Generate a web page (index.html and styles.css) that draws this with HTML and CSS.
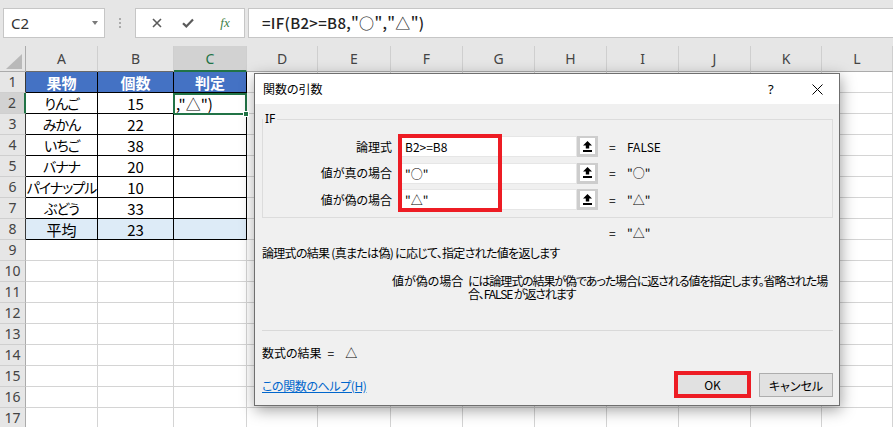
FILE: index.html
```html
<!DOCTYPE html>
<html lang="ja">
<head>
<meta charset="utf-8">
<title>関数の引数</title>
<link rel="stylesheet" href="styles.css">
</head>
<body>
<div class="fbar">
  <div class="namebox"><span>C2</span><i class="caret"></i></div>
  <div class="grip"><i></i><i></i><i></i></div>
  <div class="fxbox">
    <span class="ic ic-x"><svg width="10" height="10" viewBox="0 0 10 10"><path d="M1 1L9 9M9 1L1 9" stroke="#5a5a5a" stroke-width="1.6" fill="none"/></svg></span>
    <span class="ic ic-ok"><svg width="12" height="10" viewBox="0 0 12 10"><path d="M1 5.2L4.3 8.4L11 1.5" stroke="#5a5a5a" stroke-width="2.2" fill="none"/></svg></span>
    <span class="ic ic-fx">fx</span>
  </div>
  <div class="formula">=IF(B2&gt;=B8,"○","△")</div>
</div>

<div class="sheet">
  <div class="corner"><i></i></div><div class="ch chb">A</div><div class="ch chb">B</div><div class="ch chsel">C</div><div class="ch">D</div><div class="ch">E</div><div class="ch">F</div><div class="ch">G</div><div class="ch">H</div><div class="ch">I</div><div class="ch">J</div><div class="ch">K</div><div class="ch">L</div>

  <div class="rh rtb">1</div><div class="tb th">果物</div><div class="tb th">個数</div><div class="tb th">判定</div><div></div><div></div><div></div><div></div><div></div><div></div><div></div><div></div><div></div>
  <div class="rh rsel">2</div><div class="tb kana">りんご</div><div class="tb">15</div><div class="tb csel"><span>,"△")</span><i class="handle"></i></div><div></div><div></div><div></div><div></div><div></div><div></div><div></div><div></div><div></div>
  <div class="rh rtb">3</div><div class="tb kana">みかん</div><div class="tb">22</div><div class="tb"></div><div></div><div></div><div></div><div></div><div></div><div></div><div></div><div></div><div></div>
  <div class="rh rtb">4</div><div class="tb kana">いちご</div><div class="tb">38</div><div class="tb"></div><div></div><div></div><div></div><div></div><div></div><div></div><div></div><div></div><div></div>
  <div class="rh rtb">5</div><div class="tb kana">バナナ</div><div class="tb">20</div><div class="tb"></div><div></div><div></div><div></div><div></div><div></div><div></div><div></div><div></div><div></div>
  <div class="rh rtb">6</div><div class="tb kana">パイナップル</div><div class="tb">10</div><div class="tb"></div><div></div><div></div><div></div><div></div><div></div><div></div><div></div><div></div><div></div>
  <div class="rh rtb">7</div><div class="tb kana">ぶどう</div><div class="tb">33</div><div class="tb"></div><div></div><div></div><div></div><div></div><div></div><div></div><div></div><div></div><div></div>
  <div class="rh rtb">8</div><div class="tb avg">平均</div><div class="tb avg">23</div><div class="tb avg"></div><div></div><div></div><div></div><div></div><div></div><div></div><div></div><div></div><div></div>
  <div class="rh">9</div><div></div><div></div><div></div><div></div><div></div><div></div><div></div><div></div><div></div><div></div><div></div><div></div>
  <div class="rh">10</div><div></div><div></div><div></div><div></div><div></div><div></div><div></div><div></div><div></div><div></div><div></div><div></div>
  <div class="rh">11</div><div></div><div></div><div></div><div></div><div></div><div></div><div></div><div></div><div></div><div></div><div></div><div></div>
  <div class="rh">12</div><div></div><div></div><div></div><div></div><div></div><div></div><div></div><div></div><div></div><div></div><div></div><div></div>
  <div class="rh">13</div><div></div><div></div><div></div><div></div><div></div><div></div><div></div><div></div><div></div><div></div><div></div><div></div>
  <div class="rh">14</div><div></div><div></div><div></div><div></div><div></div><div></div><div></div><div></div><div></div><div></div><div></div><div></div>
  <div class="rh">15</div><div></div><div></div><div></div><div></div><div></div><div></div><div></div><div></div><div></div><div></div><div></div><div></div>
  <div class="rh">16</div><div></div><div></div><div></div><div></div><div></div><div></div><div></div><div></div><div></div><div></div><div></div><div></div>
  <div class="rh">17</div><div></div><div></div><div></div><div></div><div></div><div></div><div></div><div></div><div></div><div></div><div></div><div></div>
</div>

<div class="dlg">
  <div class="dlg-title">
    <span class="dlg-name">関数の引数</span>
    <span class="dlg-help">?</span>
    <span class="dlg-close"><svg width="11" height="11" viewBox="0 0 11 11"><path d="M0.5 0.5L10.5 10.5M10.5 0.5L0.5 10.5" stroke="#000" stroke-width="1" fill="none"/></svg></span>
  </div>
  <div class="dlg-body">
    <fieldset class="grp">
      <legend>IF</legend>
      <div class="arg">
        <span class="lbl">論理式</span>
        <span class="inp">B2&gt;=B8</span>
        <span class="refbtn"><span class="refin"><svg width="9" height="11" viewBox="0 0 9 11"><path d="M4.5 0L9 4.6H6.2V7.6H2.8V4.6H0Z" fill="#000"/><rect x="0" y="9" width="9" height="2" fill="#000"/></svg></span></span>
        <span class="eq">=</span><span class="val">FALSE</span>
      </div>
      <div class="arg">
        <span class="lbl">値が真の場合</span>
        <span class="inp">"○"</span>
        <span class="refbtn"><span class="refin"><svg width="9" height="11" viewBox="0 0 9 11"><path d="M4.5 0L9 4.6H6.2V7.6H2.8V4.6H0Z" fill="#000"/><rect x="0" y="9" width="9" height="2" fill="#000"/></svg></span></span>
        <span class="eq">=</span><span class="val">"○"</span>
      </div>
      <div class="arg">
        <span class="lbl">値が偽の場合</span>
        <span class="inp">"△"</span>
        <span class="refbtn"><span class="refin"><svg width="9" height="11" viewBox="0 0 9 11"><path d="M4.5 0L9 4.6H6.2V7.6H2.8V4.6H0Z" fill="#000"/><rect x="0" y="9" width="9" height="2" fill="#000"/></svg></span></span>
        <span class="eq">=</span><span class="val">"△"</span>
      </div>
    </fieldset>
    <div class="eqrow"><span class="eq">=</span><span class="val">"△"</span></div>
    <p class="desc">論理式の結果 (真または偽) に応じて、指定された値を返します</p>
    <div class="detail">
      <span class="dl">値が偽の場合</span>
      <div class="dt">
        <span class="dline">には論理式の結果が偽であった場合に返される値を指定します。省略された場</span>
        <span class="dline">合、FALSE が返されます</span>
      </div>
    </div>
    <div class="sep"></div>
    <div class="result"><span>数式の結果</span><span class="r-eq">=</span><span class="r-val">△</span></div>
    <div class="foot">
      <a class="help" href="#">この関数のヘルプ(H)</a>
      <div class="btns">
        <button class="btn ok">OK</button>
        <button class="btn cancel">キャンセル</button>
      </div>
    </div>
  </div>
  <div class="mark"></div>
</div>
</body>
</html>
```
FILE: styles.css
```css
* { box-sizing: border-box; }

body {
  margin: 0;
  width: 893px;
  height: 427px;
  overflow: hidden;
  position: relative;
  background: #fff;
  font-family: "Noto Sans CJK JP", "Noto Sans", sans-serif;
  font-feature-settings: "palt";
  color: #000;
}

/* formula bar */
.fbar {
  height: 46px;
  background: #e6e6e6;
  display: flex;
  align-items: flex-start;
  padding-top: 8px;
}
.namebox {
  margin-left: 3px;
  width: 102px;
  height: 30px;
  background: #fff;
  border: 1px solid #c6c6c6;
  display: flex;
  align-items: center;
  justify-content: space-between;
  padding: 0 6px 0 7px;
  font-family: "Noto Sans", sans-serif;
  font-size: 15px;
  color: #333;
}
.caret {
  width: 0;
  height: 0;
  border-left: 3.5px solid transparent;
  border-right: 3.5px solid transparent;
  border-top: 4px solid #7a7a7a;
}
.grip {
  width: 30px;
  height: 30px;
  display: flex;
  flex-direction: column;
  align-items: center;
  justify-content: center;
  gap: 2px;
}
.grip i {
  width: 2px;
  height: 2px;
  background: #ababab;
}
.fxbox {
  width: 110px;
  height: 30px;
  background: #fff;
  border: 1px solid #c6c6c6;
  display: flex;
  align-items: center;
}
.ic {
  width: 16px;
  display: flex;
  justify-content: center;
  align-items: center;
}
.ic-x { margin-left: 13px; }
.ic-ok { margin-left: 15px; }
.ic-fx {
  margin-left: 21px;
  font-family: "Liberation Serif", serif;
  font-style: italic;
  font-size: 13px;
  color: #3e8044;
}
.formula {
  margin-left: 3px;
  flex: 1;
  height: 30px;
  background: #fff;
  border: 1px solid #c6c6c6;
  border-right: none;
  padding-left: 13px;
  font-size: 15px;
  font-weight: 500;
  line-height: 28px;
  color: #222;
  letter-spacing: 0.3px;
  font-feature-settings: normal;
}

/* sheet grid */
.sheet {
  display: grid;
  grid-template-columns: 26px 72px 76px 73px 71px 73px 72px 72px 72px 72px 72px 71px 71px;
  grid-template-rows: 26px;
  grid-auto-rows: 21px;
}
.sheet > div {
  border-right: 1px solid #d4d4d4;
  border-bottom: 1px solid #d4d4d4;
  display: flex;
  align-items: center;
  justify-content: center;
  font-size: 15px;
  line-height: 1;
  white-space: nowrap;
  position: relative;
}
.sheet > .corner {
  background: #e6e6e6;
  align-items: flex-end;
  justify-content: flex-end;
  padding: 0 3px 2px 0;
  border-right-color: #ababab;
  border-bottom-color: #ababab;
}
.corner i {
  width: 0;
  height: 0;
  border-left: 16px solid transparent;
  border-bottom: 15px solid #b9b9b9;
}
.sheet > .ch {
  background: #e6e6e6;
  font-family: "Noto Sans", sans-serif;
  font-size: 14px;
  color: #444;
  border-right-color: #cfcfcf;
  border-bottom-color: #ababab;
  padding-top: 1px;
}
.sheet > .chb { border-bottom-color: #6a6a6a; }
.sheet > .chsel {
  background: #d2d2d2;
  color: #217346;
  border-bottom: 2px solid #217346;
}
.sheet > .rh {
  background: #e6e6e6;
  font-family: "Noto Sans", sans-serif;
  font-size: 14px;
  color: #444;
  border-right-color: #ababab;
  border-bottom-color: #cfcfcf;
}
.sheet > .rtb { border-right-color: #3a3a3a; }
.sheet > .rsel {
  background: #d2d2d2;
  border-right: 2px solid #217346;
}
.sheet > .tb {
  border-right-color: #000;
  border-bottom-color: #000;
}
.sheet > .kana {
  font-size: 14px;
  letter-spacing: -1px;
}
.sheet > .th {
  background: #4472c4;
  color: #fff;
  font-weight: bold;
}
.sheet > .avg { background: #ddebf7; }
.sheet > .csel {
  justify-content: flex-start;
  padding-left: 2px;
}
.csel::after {
  content: "";
  position: absolute;
  left: -1px;
  top: 0;
  right: -1px;
  bottom: -2px;
  border: 2px solid #217346;
}
.handle {
  position: absolute;
  right: -3px;
  bottom: -4px;
  width: 6px;
  height: 6px;
  background: #217346;
  border: 1px solid #fff;
  z-index: 2;
}

/* dialog */
.dlg {
  position: absolute;
  left: 254px;
  top: 73px;
  width: 586px;
  height: 333px;
  border: 1px solid #6f6f6f;
  background: #f0f0f0;
  box-shadow: 1px 4px 14px rgba(0, 0, 0, 0.38);
  font-size: 12px;
  line-height: 14px;
  color: #000;
}
.dlg-title {
  height: 30px;
  background: #fff;
  display: flex;
  align-items: center;
  padding-left: 8px;
}
.dlg-name { width: 505px; }
.dlg-help {
  width: 44px;
  font-family: "Noto Sans", sans-serif;
  font-size: 13px;
}
.dlg-close {
  display: flex;
  align-items: center;
}
.dlg-body {
  padding: 0 6px 0 7px;
}
.grp {
  margin: 8px 0 0 0;
  padding: 10px 0 7px 0;
  border: 1px solid #dcdcdc;
  min-width: 0;
}
.grp legend {
  padding: 0 2px;
  margin-left: 0;
  line-height: 14px;
  font-family: "Noto Sans", sans-serif;
}
.arg {
  display: flex;
  align-items: center;
  height: 21px;
  margin-bottom: 5.5px;
}
.arg:last-child { margin-bottom: 0; }
.lbl {
  width: 129px;
  text-align: right;
}
.inp {
  margin-left: 6px;
  width: 179px;
  height: 21px;
  background: #fff;
  border: 1px solid #e6e6e6;
  padding-left: 6px;
  line-height: 19px;
  white-space: nowrap;
}
.refbtn {
  width: 21px;
  height: 21px;
  background: #cdcdcd;
  padding: 2px 3px 3px 3px;
  display: flex;
}
.refin {
  flex: 1;
  background: #fff;
  display: flex;
  align-items: center;
  justify-content: center;
}
.eq {
  display: inline-block;
  width: 29px;
  padding-left: 11px;
}
.eqrow {
  margin-top: 8px;
  padding-left: 336px;
  height: 14px;
  display: flex;
}
.eqrow .eq { width: 29px; }
.desc {
  margin: 6px 0 0 0;
  white-space: nowrap;
  letter-spacing: -0.7px;
}
.detail {
  margin-top: 13px;
  display: flex;
}
.dl {
  flex: 0 0 auto;
  margin-left: 130px;
  width: 76px;
  white-space: nowrap;
  line-height: 13px;
  padding-top: 1px;
}
.dt {
  flex: 0 0 auto;
  display: flex;
  flex-direction: column;
  padding-top: 1px;
}
.dline {
  display: block;
  height: 13px;
  line-height: 13px;
  white-space: nowrap;
  letter-spacing: -1.1px;
}
.sep {
  margin-top: 30px;
  height: 1px;
  background: #d9d9d9;
}
.result {
  margin-top: 15px;
  height: 14px;
  display: flex;
}
.r-eq { margin-left: 6px; }
.r-val { margin-left: 11px; }
.foot {
  margin-top: 11px;
  display: flex;
  justify-content: space-between;
  align-items: flex-start;
}
.help {
  margin-top: 8px;
  color: #0066cc;
  text-decoration: underline;
  letter-spacing: -0.4px;
}
.btns {
  display: flex;
  align-items: flex-start;
}
.btn {
  font-family: "Noto Sans CJK JP", "Noto Sans", sans-serif;
  font-feature-settings: "palt";
  font-size: 12px;
  color: #000;
  background: #e1e1e1;
  padding: 0;
  margin: 0;
}
.ok {
  width: 77px;
  height: 27px;
  border: 4px solid #ed1c24;
}
.cancel {
  margin: 2px 0 0 8px;
  width: 74px;
  height: 24px;
  border: 1px solid #adadad;
}
.mark {
  position: absolute;
  left: 143px;
  top: 60px;
  width: 104px;
  height: 78px;
  border: 4px solid #ed1c24;
}
```
